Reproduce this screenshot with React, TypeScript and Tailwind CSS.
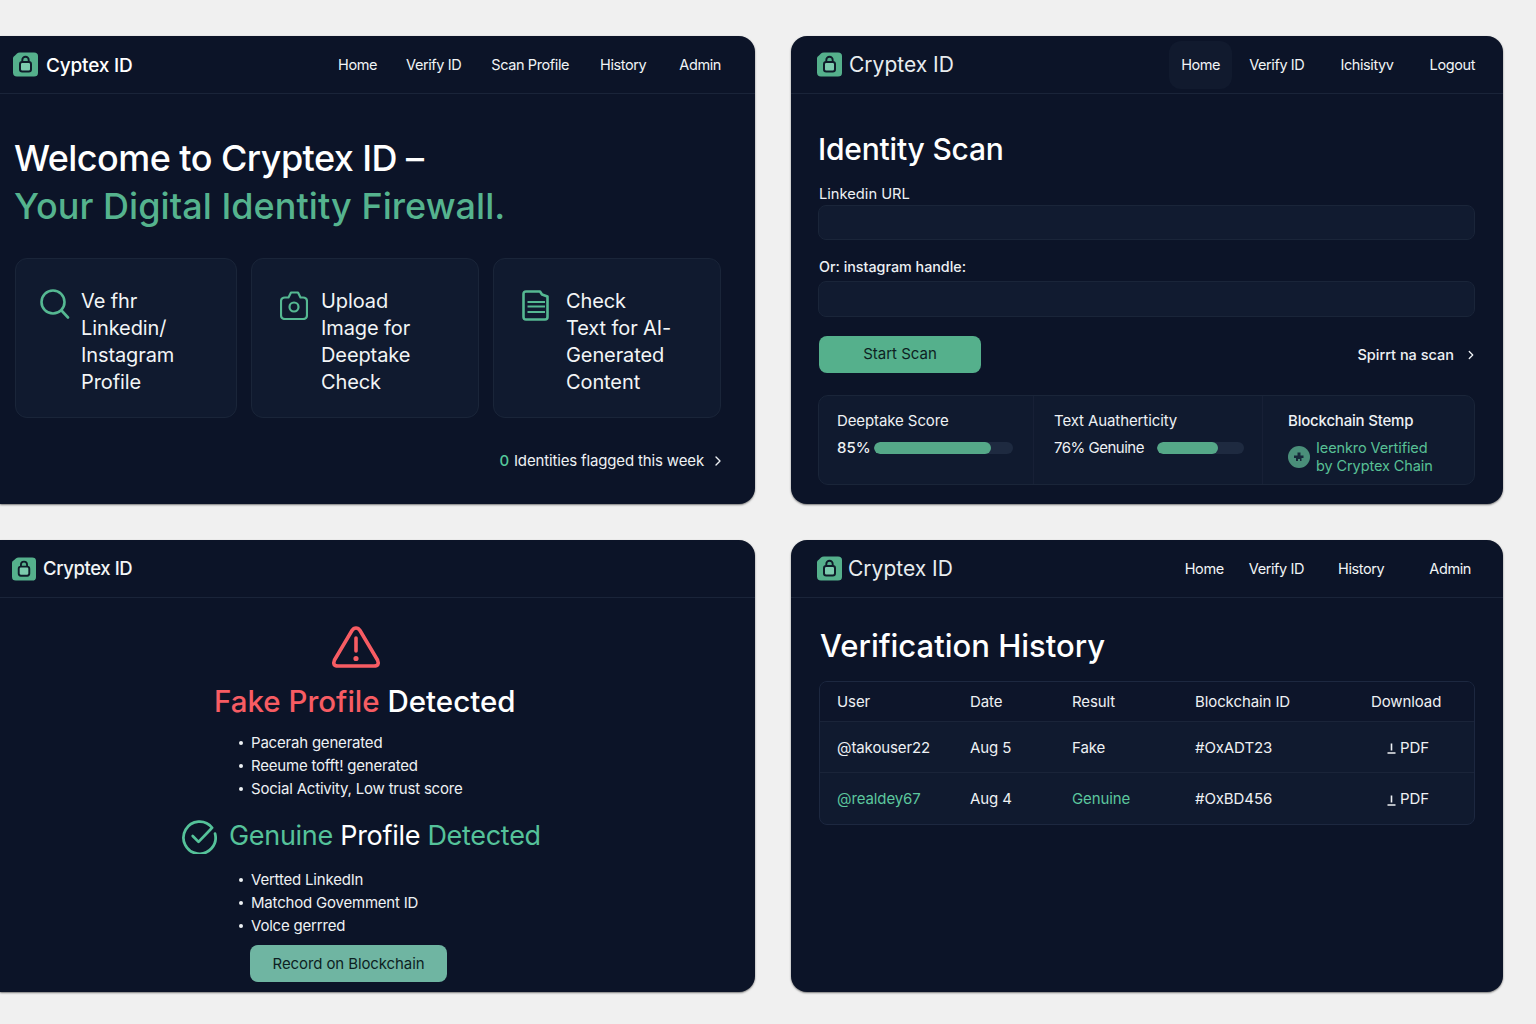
import { ChevronRight } from 'lucide-react'

type NavItem = { label: string; className?: string }

const LockLogo = ({ className }: { className: string }) => (
  <svg viewBox="0 0 25 25" className={className}>
    <path d="M2 3.5 L4 1.5 Q5 0.5 7 0.5 H21 Q25 0.5 25 4 V21 Q25 24.5 21 24.5 H4 Q0 24.5 0 20.5 V6 Q0 4.5 2 3.5Z" fill="#55b08c" />
    <rect x="7" y="10" width="11" height="9.5" rx="2.2" fill="#7ccbae" stroke="#0f1c2a" strokeWidth="2" />
    <path d="M9.3 10 V8 a3.2 3.2 0 0 1 6.4 0 V10" fill="none" stroke="#0f1c2a" strokeWidth="1.9" />
  </svg>
)

const Header = ({ title, titleClass, logoClass, nav, className }: { title: string; titleClass: string; logoClass: string; nav: NavItem[]; className: string }) => (
  <header className={`h-[58px] shrink-0 flex items-center border-b border-[#1a2439] ${className}`}>
    <LockLogo className={logoClass} />
    <span className={titleClass}>{title}</span>
    <nav className="ml-auto flex items-center text-[14.5px] tracking-[-0.4px] text-[#f1f4f6]">
      {nav.map((item) => (
        <span key={item.label} className={item.className}>{item.label}</span>
      ))}
    </nav>
  </header>
)

const Panel = ({ className, children }: { className: string; children: React.ReactNode }) => (
  <section className={`bg-[#0c1428] flex flex-col overflow-hidden shadow-[0_1px_2px_rgba(0,0,0,0.5)] ${className}`}>{children}</section>
)

const SearchIcon = () => (
  <svg viewBox="0 0 30 30" className="w-[30px] h-[30px] shrink-0" fill="none" stroke="#55b892" strokeWidth="2.6" strokeLinecap="round">
    <circle cx="13" cy="13" r="11.5" />
    <path d="M21.5 21.5 L28 28.5" />
  </svg>
)

const CameraIcon = () => (
  <svg viewBox="0 0 28 29" className="w-[28px] h-[29px] shrink-0" fill="none" stroke="#55b892" strokeWidth="2.2" strokeLinejoin="round">
    <path d="M5 6.5 H8.5 L11 1.5 H18 L20.5 6.5 H23 Q27 6.5 27 10.5 V24 Q27 28 23 28 H5 Q1 28 1 24 V10.5 Q1 6.5 5 6.5Z" />
    <circle cx="14" cy="16" r="4.5" />
  </svg>
)

const DocIcon = () => (
  <svg viewBox="0 0 27 31" className="w-[27px] h-[31px] shrink-0" fill="none" stroke="#55b892" strokeWidth="2.6" strokeLinejoin="round">
    <path d="M4 1.5 H18 L20 4.5 L25.5 6.5 V27 Q25.5 29.5 23 29.5 H4 Q1.5 29.5 1.5 27 V4 Q1.5 1.5 4 1.5Z" />
    <path d="M5.5 12 H23 M5.5 16.5 H23 M5.5 22 H23" strokeWidth="1.8" />
  </svg>
)

const FeatureCard = ({ icon, iconClass, lines, className }: { icon: React.ReactNode; iconClass: string; lines: string[]; className: string }) => (
  <div className={`h-[160px] rounded-[12px] border border-[#1a2539] bg-[#101a2f] flex pt-[29px] ${className}`}>
    <div className={iconClass}>{icon}</div>
    <div className="text-[20px] leading-[27px] tracking-[-0.1px] text-[#f2f5f6]">
      {lines.map((line) => (
        <div key={line}>{line}</div>
      ))}
    </div>
  </div>
)

const Bullets = ({ items }: { items: string[] }) => (
  <ul className="pl-[239px] text-[15px] leading-[23px] tracking-[-0.2px] text-[#eef1f4]">
    {items.map((item) => (
      <li key={item} className="flex items-center gap-[8px]">
        <span className="w-[4px] h-[4px] rounded-full bg-[#eef1f4]" />
        {item}
      </li>
    ))}
  </ul>
)

const ProgressBar = ({ value, className }: { value: number; className: string }) => (
  <div className={`h-[12px] rounded-full bg-[#1e2a40] overflow-hidden ${className}`}>
    <div className="h-full rounded-full bg-[#55a888]" style={{ width: `${value}%` }} />
  </div>
)

const HomePanel = () => (
  <Panel className="rounded-r-[16px]">
    <Header
      className="pl-[13px] pr-[34px]"
      title="Cyptex ID"
      titleClass="ml-[8px] mt-[3px] text-[19px] font-medium tracking-[-0.2px] text-white"
      logoClass="w-[25px] h-[25px]"
      nav={[
        { label: 'Home' },
        { label: 'Verify ID', className: 'ml-[29px]' },
        { label: 'Scan Profile', className: 'ml-[30px]' },
        { label: 'History', className: 'ml-[31px]' },
        { label: 'Admin', className: 'ml-[33px]' },
      ]}
    />
    <div className="pl-[15px] pr-[34px]">
      <h1 className="mt-[40px] -ml-px text-[36px] leading-[48px] font-medium tracking-[-0.55px] text-white">
        Welcome to Cryptex ID –
        <br />
        <span className="tracking-[0.05px] text-[#55b38e]">Your Digital Identity Firewall.</span>
      </h1>
      <div className="mt-[28px] flex gap-[14px]">
        <FeatureCard className="w-[222px]" iconClass="ml-[24px] mr-[11px] mt-[1px]" icon={<SearchIcon />} lines={['Ve fhr', 'Linkedin/', 'Instagram', 'Profile']} />
        <FeatureCard className="w-[228px]" iconClass="ml-[28px] mr-[13px] mt-[3px]" icon={<CameraIcon />} lines={['Upload', 'Image for', 'Deeptake', 'Check']} />
        <FeatureCard className="w-[228px]" iconClass="ml-[28px] mr-[17px] mt-[2px]" icon={<DocIcon />} lines={['Check', 'Text for AI-', 'Generated', 'Content']} />
      </div>
      <div className="mt-[32px] flex items-center justify-end text-[15px] tracking-[-0.15px] text-[#eef1f4]">
        <span className="mr-[5px] font-medium text-[#55c79a]">0</span>
        Identities flagged this week
        <ChevronRight className="ml-[6px] -mr-[5px] w-[16px] h-[16px]" strokeWidth={2} />
      </div>
    </div>
  </Panel>
)

const ScanPanel = () => (
  <Panel className="rounded-[16px]">
    <Header
      className="pl-[26px] pr-[28px]"
      title="Cryptex ID"
      titleClass="ml-[7px] text-[21px] tracking-[0px] text-[#e8ecef]"
      logoClass="w-[25px] h-[25px]"
      nav={[
        { label: 'Home', className: 'h-[48px] w-[63px] rounded-[12px] bg-[#111a2e] flex items-center justify-center' },
        { label: 'Verify ID', className: 'ml-[17px]' },
        { label: 'Ichisityv', className: 'ml-[36px]' },
        { label: 'Logout', className: 'ml-[36px]' },
      ]}
    />
    <div className="pl-[27px] pr-[28px] flex flex-col">
      <h2 className="mt-[36px] text-[30px] leading-[38px] font-medium tracking-[-0.2px] text-white">Identity Scan</h2>
      <label className="mt-[16px] ml-px text-[14.7px] leading-[20px] text-[#eef1f4]">Linkedin URL</label>
      <div className="mt-[1px] h-[35px] rounded-[8px] border border-[#1a2539] bg-[#111b30]" />
      <label className="mt-[17px] ml-px text-[14.3px] leading-[20px] font-medium text-[#eef1f4]">Or: instagram handle:</label>
      <div className="mt-[4px] h-[36px] rounded-[8px] border border-[#1a2539] bg-[#111b30]" />
      <div className="mt-[19px] ml-px flex items-center justify-between">
        <button className="w-[162px] h-[37px] rounded-[8px] bg-[#55b08c] text-[15px] text-[#0d1f22]">Start Scan</button>
        <span className="flex items-center text-[14.5px] font-medium text-[#eef1f4]">
          Spirrt na scan
          <ChevronRight className="ml-[10px] -mr-[3px] w-[14px] h-[14px]" strokeWidth={2.2} />
        </span>
      </div>
      <div className="mt-[22px] h-[90px] rounded-[10px] border border-[#1a2539] bg-[#101a2f] grid grid-cols-[214px_229px_1fr] text-[#eef1f4]">
        <div className="pl-[18px] pr-[20px] pt-[15px]">
          <div className="text-[15px] leading-[20px] tracking-[-0.1px]">Deeptake Score</div>
          <div className="mt-[7px] flex items-center gap-[3px] text-[15px] leading-[20px] font-medium">
            85%
            <ProgressBar value={84} className="flex-1" />
          </div>
        </div>
        <div className="border-l border-[#172036] pl-[20px] pr-[18px] pt-[15px]">
          <div className="text-[15px] leading-[20px] tracking-[-0.1px]">Text Auatherticity</div>
          <div className="mt-[7px] flex items-center gap-[13px] text-[15px] leading-[20px] tracking-[-0.5px]">
            76% Genuine
            <ProgressBar value={70} className="flex-1" />
          </div>
        </div>
        <div className="border-l border-[#172036] pl-[25px] pt-[15px]">
          <div className="text-[15px] leading-[20px] font-medium tracking-[-0.2px]">Blockchain Stemp</div>
          <div className="mt-[8px] flex items-center gap-[6px]">
            <svg viewBox="0 0 22 22" className="w-[22px] h-[22px] shrink-0">
              <circle cx="11" cy="11" r="11" fill="#4a8f7a" />
              <path d="M9.5 6.5 h3 v3 h3 v2.5 h-2 v3 h-1.5 v-2 h-2 v2 h-2 v-3 h-2 v-2.5 h3.5z" fill="#16283a" />
            </svg>
            <div className="text-[14.5px] leading-[18px] tracking-[-0.1px] text-[#58c096]">
              Ieenkro Vertified
              <br />
              by Cryptex Chain
            </div>
          </div>
        </div>
      </div>
    </div>
  </Panel>
)

const ResultPanel = () => (
  <Panel className="rounded-r-[16px]">
    <Header className="pl-[12px] pr-[34px]" title="Cryptex ID" titleClass="ml-[7px] text-[18.5px] font-medium tracking-[-0.4px] text-[#f2f5f6]" logoClass="w-[24px] h-[24px]" nav={[]} />
    <svg viewBox="0 0 50 44" className="mt-[27px] ml-[331px] w-[50px] h-[44px]" fill="none" stroke="#f75c63" strokeWidth="3.6" strokeLinejoin="round" strokeLinecap="round">
      <path d="M25 3 Q27.5 3 29 5.5 L46.5 35 Q49 41 43 41 H7 Q1 41 3.5 35 L21 5.5 Q22.5 3 25 3Z" />
      <path d="M25 13 V26" />
      <circle cx="25" cy="33.5" r="1.5" fill="#f75c63" strokeWidth="2.2" />
    </svg>
    <h3 className="mt-[13px] ml-[214px] text-[29.5px] leading-[38px] font-medium text-white">
      <span className="text-[#f75c63]">Fake Profile</span> Detected
    </h3>
    <div className="mt-[11px]">
      <Bullets items={['Pacerah generated', 'Reeume tofft! generated', 'Social Activity, Low trust score']} />
    </div>
    <div className="mt-[18px] ml-[182px] flex items-center gap-[12px]">
      <svg viewBox="0 0 36 36" className="w-[35px] h-[35px]" fill="none" stroke="#55c29a" strokeWidth="2.8" strokeLinecap="round" strokeLinejoin="round">
        <path d="M31 9 A16.5 16.5 0 1 0 34 15" />
        <path d="M11 17.5 L17 23.5 L30 10" />
      </svg>
      <span className="text-[27px] leading-[36px] tracking-[-0.3px] text-[#55c29a]">
        Genuine <span className="text-white">Profile</span> Detected
      </span>
    </div>
    <div className="mt-[14px]">
      <Bullets items={['Vertted  LinkedIn', 'Matchod Govemment ID', 'Volce gerrred']} />
    </div>
    <button className="mt-[8px] ml-[250px] w-[197px] h-[37px] pt-px rounded-[8px] bg-[#6fb5a2] text-[15px] tracking-[-0.1px] text-[#0d1f22]">Record on Blockchain</button>
  </Panel>
)

const rows = [
  { user: '@takouser22', date: 'Aug 5', result: 'Fake', id: '#OxADT23', good: false },
  { user: '@realdey67', date: 'Aug 4', result: 'Genuine', id: '#OxBD456', good: true },
]

const HistoryPanel = () => (
  <Panel className="rounded-[16px]">
    <Header
      className="pl-[26px] pr-[28px]"
      title="Cryptex ID"
      titleClass="ml-[6px] text-[21px] text-[#e8ecef]"
      logoClass="w-[25px] h-[25px]"
      nav={[
        { label: 'Home' },
        { label: 'Verify ID', className: 'ml-[25px]' },
        { label: 'History', className: 'ml-[34px]' },
        { label: 'Admin', className: 'ml-[45px] mr-[4px]' },
      ]}
    />
    <div className="pl-[28px] pr-[28px]">
      <h2 className="mt-[28px] ml-[1px] text-[31px] leading-[40px] font-medium text-white">Verification History</h2>
      <div className="mt-[15px] rounded-[8px] border border-[#1d2840] bg-[#101a2f] text-[15px] tracking-[-0.1px] text-[#eef1f4] overflow-hidden">
        <div className="h-[40px] pt-px grid grid-cols-[133px_102px_123px_176px_1fr] items-center pl-[17px] bg-[#0d152a] border-b border-[#1a2439]">
          <span>User</span>
          <span>Date</span>
          <span>Result</span>
          <span>Blockchain ID</span>
          <span>Download</span>
        </div>
        {rows.map((row) => (
          <div key={row.user} className="h-[51px] pt-[2px] grid grid-cols-[133px_102px_123px_176px_1fr] items-center pl-[17px] border-b border-[#1a2439] last:border-b-0">
            <span className={row.good ? 'text-[#5cc79e]' : ''}>{row.user}</span>
            <span>{row.date}</span>
            <span className={row.good ? 'text-[#5cc79e]' : ''}>{row.result}</span>
            <span>{row.id}</span>
            <span className="pl-[16px] flex items-center gap-[4px]">
              <svg viewBox="0 0 9 12" className="w-[9px] h-[12px]" fill="none" stroke="#eef1f4" strokeWidth="1.6">
                <path d="M4.5 1.5 V8.5 M0.5 11 H8.5" />
              </svg>
              PDF
            </span>
          </div>
        ))}
      </div>
    </div>
  </Panel>
)

export default function App() {
  return (
    <div className="min-h-[1024px] bg-[#f0f0f0] pt-[36px] font-['Inter',sans-serif] grid grid-cols-[755px_712px] grid-rows-[468px_452px] gap-x-[36px] gap-y-[36px] content-start">
      <HomePanel />
      <ScanPanel />
      <ResultPanel />
      <HistoryPanel />
    </div>
  )
}
